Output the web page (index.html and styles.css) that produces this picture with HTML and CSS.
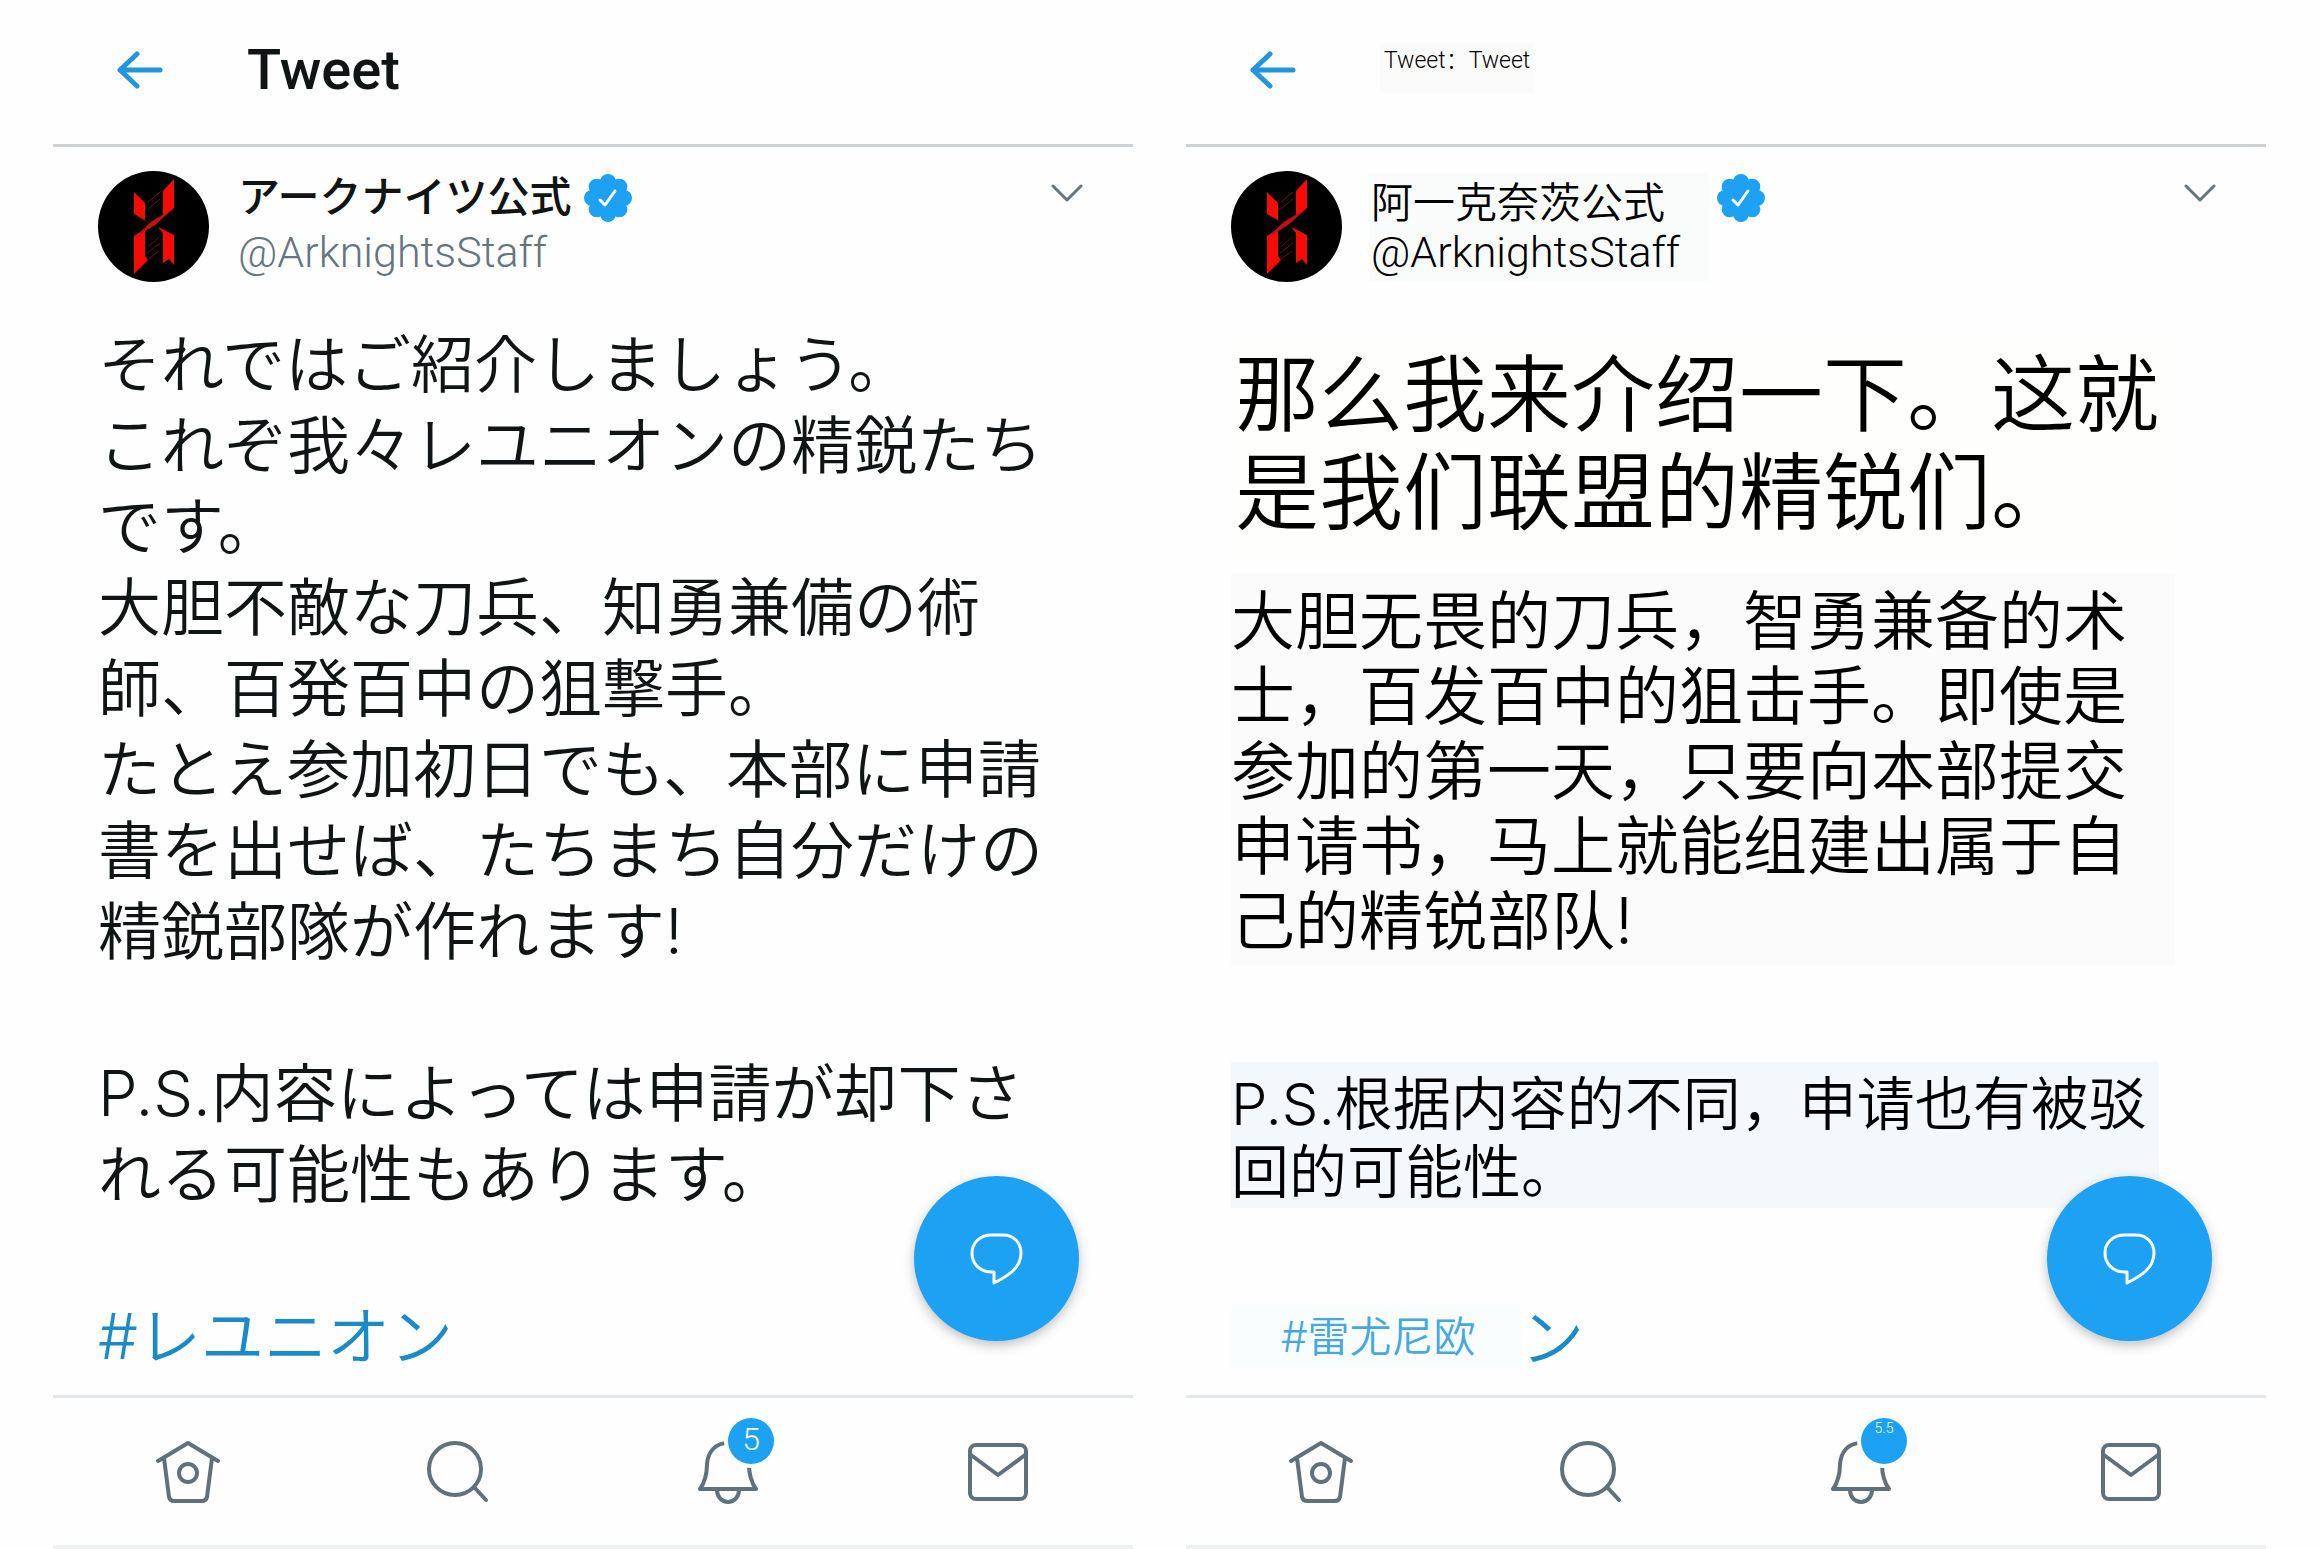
FILE: index.html
```html
<!DOCTYPE html>
<html lang="ja">
<head>
    <meta charset="UTF-8">
    <meta name="viewport" content="width=device-width, initial-scale=1.0">
    <title>Tweet</title>
    <link rel="stylesheet" href="styles.css">
</head>
<body>
    <!-- shared icons -->
    <svg class="sprite" aria-hidden="true">
        <symbol id="back" viewBox="0 0 46 38">
            <path d="M3 19H43M20 3L3 19L20 35"/>
        </symbol>
        <symbol id="caret" viewBox="0 0 32 18">
            <path d="M2 2L16 16L30 2"/>
        </symbol>
        <symbol id="avatar" viewBox="0 0 111 111">
            <circle cx="55.5" cy="55.5" r="55.5" fill="#000"/>
            <path fill="#f80a05" d="M36 21L47 32V49L36 43ZM76 8V37L65 46V20ZM36 65L47 58V85L50 89L36 103ZM65 62L60 56L76 64V94L71 88L65 92Z"/>
            <path fill="#c81010" d="M76 37L57 54L36 67L53 51ZM36 43L51 52L47 49Z"/>
            <path fill="none" stroke="#6b1210" stroke-width="1" d="M50 31L62 21M50 38L62 28M51 75L61 66M49 82L62 72M49 89L61 80"/>
        </symbol>
        <symbol id="verified" viewBox="0 0 48 48">
            <g fill="#1da1f2">
                <circle cx="24" cy="24" r="18"/>
                <circle cx="24" cy="8" r="8"/>
                <circle cx="35.3" cy="12.7" r="8"/>
                <circle cx="40" cy="24" r="8"/>
                <circle cx="35.3" cy="35.3" r="8"/>
                <circle cx="24" cy="40" r="8"/>
                <circle cx="12.7" cy="35.3" r="8"/>
                <circle cx="8" cy="24" r="8"/>
                <circle cx="12.7" cy="12.7" r="8"/>
            </g>
            <path fill="none" stroke="#fff" stroke-width="3" stroke-linecap="round" stroke-linejoin="round" d="M16 26L21 31L31 17"/>
        </symbol>
        <symbol id="bubble" viewBox="0 0 54 54">
            <path d="M21 3H33C44 3 51 11 51 21C51 35 40 43 24 51V40H22C10 40 2 32 2 21C2 11 10 3 21 3Z"/>
        </symbol>
        <symbol id="home" viewBox="0 0 66 64">
            <path d="M3 21L33 3L63 21M9 18L14 57Q15 61 19 61H47Q51 61 52 57L57 18"/>
            <circle cx="33" cy="33" r="9"/>
        </symbol>
        <symbol id="search" viewBox="0 0 66 64">
            <circle cx="30" cy="29" r="26"/>
            <path d="M49 47L61 60"/>
        </symbol>
        <symbol id="bell" viewBox="0 0 66 64">
            <path d="M33 3C20 3 13 12 12 24C12 35 10 42 5 49H61C56 42 54 35 54 24C53 12 46 3 33 3ZM22 50C22 57 27 62 33 62C39 62 44 57 44 50"/>
        </symbol>
        <symbol id="mail" viewBox="0 0 66 64">
            <rect x="5" y="5" width="56" height="54" rx="6"/>
            <path d="M6 15L33 35L60 15"/>
        </symbol>
    </svg>

    <section class="pane">
        <header class="topbar">
            <a href="#" class="back" aria-label="Back"><svg><use href="#back"/></svg></a>
            <h1>Tweet</h1>
        </header>
        <main class="tweet">
            <div class="user">
                <svg class="avatar"><use href="#avatar"/></svg>
                <div class="names">
                    <p class="name">アークナイツ公式</p>
                    <p class="handle">@ArknightsStaff</p>
                </div>
                <svg class="verified"><use href="#verified"/></svg>
                <button class="more" aria-label="More"><svg><use href="#caret"/></svg></button>
            </div>
            <p class="text">それではご紹介しましょう。<br>
                これぞ我々レユニオンの精鋭たち<br>
                です。<br>
                大胆不敵な刀兵、知勇兼備の術<br>
                師、百発百中の狙撃手。<br>
                たとえ参加初日でも、本部に申請<br>
                書を出せば、たちまち自分だけの<br>
                精鋭部隊が作れます!<br>
                <br>
                P.S.内容によっては申請が却下さ<br>
                れる可能性もあります。<br>
                <br>
                <a href="#">#レユニオン</a></p>
            <button class="compose" aria-label="Reply"><svg><use href="#bubble"/></svg></button>
        </main>
        <nav class="tabs">
            <a href="#" aria-label="Home"><svg><use href="#home"/></svg></a>
            <a href="#" aria-label="Search"><svg><use href="#search"/></svg></a>
            <a href="#" aria-label="Notifications"><svg><use href="#bell"/></svg><span class="badge">5</span></a>
            <a href="#" aria-label="Messages"><svg><use href="#mail"/></svg></a>
        </nav>
    </section>

    <section class="pane translated" lang="zh-CN">
        <header class="topbar">
            <a href="#" class="back" aria-label="Back"><svg><use href="#back"/></svg></a>
            <h1>Tweet：Tweet</h1>
        </header>
        <main class="tweet">
            <div class="user">
                <svg class="avatar"><use href="#avatar"/></svg>
                <div class="names">
                    <p class="name">阿一克奈茨公式</p>
                    <p class="handle">@ArknightsStaff</p>
                </div>
                <svg class="verified"><use href="#verified"/></svg>
                <button class="more" aria-label="More"><svg><use href="#caret"/></svg></button>
            </div>
            <p class="intro">那么我来介绍一下。这就<br>是我们联盟的精锐们。</p>
            <p class="detail">大胆无畏的刀兵，智勇兼备的术<br>
                士，百发百中的狙击手。即使是<br>
                参加的第一天，只要向本部提交<br>
                申请书，马上就能组建出属于自<br>
                己的精锐部队!</p>
            <p class="ps">P.S.根据内容的不同，申请也有被驳<br>回的可能性。</p>
            <p class="tag"><a href="#">#雷尤尼欧</a><span lang="ja">ン</span></p>
            <button class="compose" aria-label="Reply"><svg><use href="#bubble"/></svg></button>
        </main>
        <nav class="tabs">
            <a href="#" aria-label="Home"><svg><use href="#home"/></svg></a>
            <a href="#" aria-label="Search"><svg><use href="#search"/></svg></a>
            <a href="#" aria-label="Notifications"><svg><use href="#bell"/></svg><span class="badge small">5.5</span></a>
            <a href="#" aria-label="Messages"><svg><use href="#mail"/></svg></a>
        </nav>
    </section>
</body>
</html>
```
FILE: styles.css
```css
*{
    margin: 0;
    padding: 0;
    box-sizing: border-box;
}
body{
    display: grid;
    grid-template-columns: 1fr 1fr;
    gap: 53px;
    padding: 0 53px;
    min-height: 100vh;
    background: #fefefe;
    color: #101414;
    font-family: Inter, "Noto Sans CJK JP", sans-serif;
    font-weight: 350;
}
a{
    color: #1b8bc8;
    text-decoration: none;
}
button{
    border: 0;
    background: none;
    cursor: pointer;
}
svg{
    display: block;
    fill: none;
    stroke-linecap: round;
    stroke-linejoin: round;
}
.sprite{
    position: absolute;
    width: 0;
    height: 0;
}
.pane{
    display: flex;
    flex-direction: column;
    min-width: 0;
}
.translated{
    color: #000;
    font-family: Inter, "Noto Sans CJK SC", sans-serif;
}

/* top bar */
.topbar{
    display: flex;
    align-items: center;
    height: 147px;
    padding: 0 64px 4px;
    border-bottom: 3px solid #cbd1d5;
}
.back svg{
    width: 46px;
    height: 38px;
    stroke: #2196dc;
    stroke-width: 5;
}
.topbar h1{
    margin-left: 84px;
    font-family: Roboto, sans-serif;
    font-size: 56px;
    font-weight: 500;
}
.translated .topbar h1{
    align-self: flex-start;
    height: 50px;
    margin-top: 43px;
    padding: 0 4px;
    background: #fbfbfb;
    font-family: Roboto, "Noto Sans CJK SC", sans-serif;
    font-size: 23px;
    font-weight: 300;
    line-height: 36px;
}

/* tweet */
.tweet{
    flex: 1;
    position: relative;
    padding: 24px 45px 16px;
}
.user{
    display: flex;
    align-items: flex-start;
    margin-bottom: 42px;
}
.avatar{
    width: 111px;
    height: 111px;
}
.names{
    width: 340px;
    height: 108px;
    margin: 2px 8px 0 27px;
    padding-left: 2px;
}
.name{
    font-family: "Noto Sans CJK JP", sans-serif;
    font-size: 42px;
    font-weight: 500;
    line-height: 42px;
}
.handle{
    color: #657580;
    font-family: Roboto, sans-serif;
    font-size: 43px;
    font-weight: 300;
    line-height: 74px;
}
.translated .names{
    background: #fafcfc;
}
.translated .name{
    font-family: "Noto Sans CJK SC", sans-serif;
    font-weight: 350;
    line-height: 54px;
}
.translated .handle{
    color: #000;
    line-height: 50px;
}
.verified{
    width: 48px;
    height: 48px;
    margin-top: 3px;
}
.more{
    margin: 13px 5px 0 auto;
}
.more svg{
    width: 32px;
    height: 18px;
    stroke: #657580;
    stroke-width: 3;
}
.text{
    font-size: 63px;
    line-height: 81px;
    white-space: nowrap;
}
.intro, .detail, .ps{
    width: fit-content;
    white-space: nowrap;
}
.intro{
    margin: 52px 0 15px 4px;
    padding: 12px 12px 17px 0;
    background: #fefefc;
    font-size: 84px;
    line-height: 98px;
}
.detail{
    margin-bottom: 97px;
    padding: 9px 48px 7px 0;
    background: #fbfbfc;
    font-size: 64px;
    line-height: 75px;
}
.ps{
    margin-bottom: 99px;
    padding: 8px 12px 2px 0;
    background: #f5f8fb;
    font-size: 58px;
    line-height: 68px;
}
.tag{
    display: flex;
    line-height: 60px;
}
.tag a{
    width: 290px;
    padding-left: 50px;
    background: #fafdfe;
    color: #45a8e0;
    font-size: 42px;
}
.tag span{
    color: #1b8bc8;
    font-size: 63px;
}
.compose{
    position: absolute;
    right: 54px;
    bottom: 54px;
    display: flex;
    align-items: center;
    justify-content: center;
    width: 165px;
    height: 165px;
    border-radius: 50%;
    background: #1da1f2;
    box-shadow: 0 4px 12px rgba(0, 0, 0, 0.25);
}
.compose svg{
    width: 54px;
    height: 54px;
    stroke: #fff;
    stroke-width: 3;
}

/* bottom tabs */
.tabs{
    display: grid;
    grid-template-columns: repeat(4, 1fr);
    height: 154px;
    border-top: 3px solid #e3e7e9;
    border-bottom: 4px solid #eeefef;
}
.tabs a{
    position: relative;
    display: flex;
    align-items: center;
    justify-content: center;
}
.tabs svg{
    width: 66px;
    height: 64px;
    stroke: #5f717d;
    stroke-width: 4;
}
.badge{
    position: absolute;
    top: 20px;
    left: 50%;
    width: 46px;
    height: 46px;
    border-radius: 50%;
    background: #1da1f2;
    box-shadow: 0 0 0 4px #fefefe;
    color: #fff;
    font-family: Roboto, sans-serif;
    font-size: 32px;
    line-height: 43px;
    text-align: center;
}
.badge.small{
    font-size: 14px;
    line-height: 20px;
}
```
